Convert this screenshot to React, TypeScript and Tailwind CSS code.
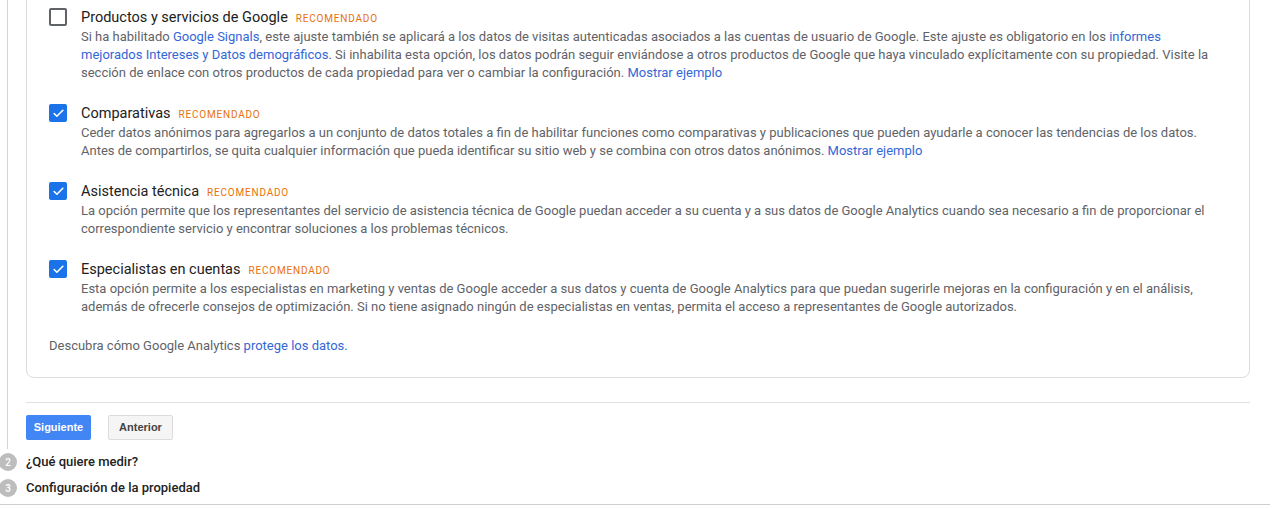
import { Check } from 'lucide-react'

type Item = {
  title: string
  checked: boolean
  body: React.ReactNode
}

const A = ({ children }: { children: React.ReactNode }) => (
  <a className="text-[#3367d6] no-underline">{children}</a>
)

const ITEMS: Item[] = [
  {
    title: 'Productos y servicios de Google',
    checked: false,
    body: (
      <>
        Si ha habilitado <A>Google Signals</A>, este ajuste también se aplicará a los datos de visitas autenticadas asociados a las cuentas de usuario de Google. Este ajuste es obligatorio en los{' '}
        <A>informes mejorados Intereses y Datos demográficos</A>. Si inhabilita esta opción, los datos podrán seguir enviándose a otros productos de Google que haya vinculado explícitamente con su propiedad. Visite la sección de enlace con otros productos de cada propiedad para ver o cambiar la configuración. <A>Mostrar ejemplo</A>
      </>
    ),
  },
  {
    title: 'Comparativas',
    checked: true,
    body: (
      <>
        Ceder datos anónimos para agregarlos a un conjunto de datos totales a fin de habilitar funciones como comparativas y publicaciones que pueden ayudarle a conocer las tendencias de los datos. Antes de compartirlos, se quita cualquier información que pueda identificar su sitio web y se combina con otros datos anónimos. <A>Mostrar ejemplo</A>
      </>
    ),
  },
  {
    title: 'Asistencia técnica',
    checked: true,
    body: (
      <>
        La opción permite que los representantes del servicio de asistencia técnica de Google puedan acceder a su cuenta y a sus datos de Google Analytics cuando sea necesario a fin de proporcionar el correspondiente servicio y encontrar soluciones a los problemas técnicos.
      </>
    ),
  },
  {
    title: 'Especialistas en cuentas',
    checked: true,
    body: (
      <>
        Esta opción permite a los especialistas en marketing y ventas de Google acceder a sus datos y cuenta de Google Analytics para que puedan sugerirle mejoras en la configuración y en el análisis, además de ofrecerle consejos de optimización. Si no tiene asignado ningún de especialistas en ventas, permita el acceso a representantes de Google autorizados.
      </>
    ),
  },
]

function Checkbox({ checked }: { checked: boolean }) {
  if (checked) {
    return (
      <div className="grid h-[18px] w-[18px] shrink-0 place-items-center rounded-[2px] bg-[#1a73e8]">
        <Check className="h-[13px] w-[13px] text-white" strokeWidth={3} />
      </div>
    )
  }
  return <div className="h-[18px] w-[18px] shrink-0 rounded-[2px] border-2 border-[#5f6368]" />
}

function Step({ n, label }: { n: number; label: string }) {
  return (
    <div className="flex h-[26px] items-center gap-[9px]">
      <div className="-ml-px grid h-[18px] w-[18px] place-items-center rounded-full bg-[#bdbdbd] text-[10px] font-medium text-white">
        {n}
      </div>
      <span className="text-[13px] font-medium text-[#222]">{label}</span>
    </div>
  )
}

export default function App() {
  return (
    <div className="h-[509px] w-[1274px] overflow-hidden bg-white font-['Roboto',sans-serif]">
      {/* step 1 */}
      <div className="flex">
        <div className="w-[26px] shrink-0">
          <div className="ml-[7px] h-full w-px bg-[#d4d4d4]" />
        </div>
        <div className="w-[1224px] pb-[9px]">
          <div className="-mt-[20px] rounded-[8px] border border-[#dadce0] pb-[22px] pl-[22px] pr-[32px] pt-[27px]">
            <div className="flex flex-col gap-[22px]">
              {ITEMS.map((it) => (
                <div key={it.title} className="flex gap-[14px]">
                  <Checkbox checked={it.checked} />
                  <div>
                    <div className="flex h-[20px] items-center gap-[8px]">
                      <span className="text-[14.5px] text-[#212121]">{it.title}</span>
                      <span className="text-[10px] tracking-[0.8px] text-[#e8710a]">RECOMENDADO</span>
                    </div>
                    <p className="text-[13px] leading-[18px] text-[#5f6368]">{it.body}</p>
                  </div>
                </div>
              ))}
            </div>
            <p className="mt-[21px] text-[13px] leading-[18px] text-[#5f6368]">
              Descubra cómo Google Analytics <A>protege los datos.</A>
            </p>
          </div>

          <div className="mt-[24px] h-px bg-[#e0e0e0]" />

          <div className="mt-[12px] flex gap-[17px] font-['Liberation_Sans',Arial,sans-serif]">
            <button className="h-[25px] w-[65px] rounded-[2px] bg-[#4285f4] text-[11px] font-bold text-white">
              Siguiente
            </button>
            <button className="h-[25px] w-[65px] rounded-[2px] border border-[#dcdcdc] bg-[#f5f5f5] text-[11px] font-bold text-[#444]">
              Anterior
            </button>
          </div>
        </div>
      </div>

      <Step n={2} label="¿Qué quiere medir?" />
      <Step n={3} label="Configuración de la propiedad" />
      <div className="mt-[3px] h-px w-[1270px] bg-[#cfcfcf]" />
    </div>
  )
}
